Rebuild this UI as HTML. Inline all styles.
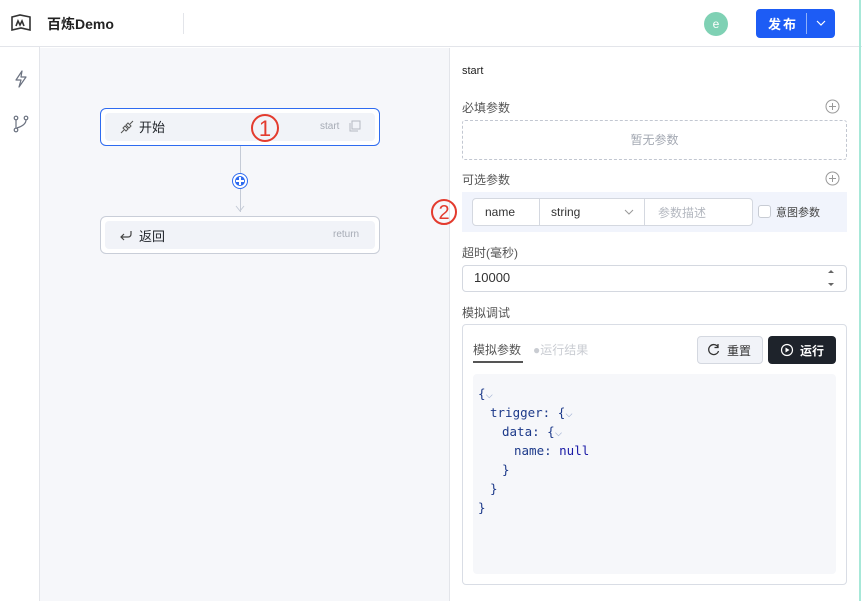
<!DOCTYPE html><html><head><meta charset="utf-8"><style>
*{box-sizing:border-box;margin:0;padding:0}
body{width:862px;height:601px;overflow:hidden;background:#fff;font-family:"Liberation Sans","Noto Sans CJK SC",sans-serif;position:relative;color:#1f2329}
.a{position:absolute}
.mono{font-family:"DejaVu Sans Mono","Liberation Mono",monospace}
.code div{height:19px;white-space:pre}
</style></head><body>
<div class="a" style="left:0;top:0;width:862px;height:47px;border-bottom:1px solid #e3e5ea"></div>
<svg class="a" style="left:10px;top:14px" width="22" height="18" viewBox="0 0 22 18"><path d="M2 3 L10 1 L20 3 L20 16 L11 14 L2 16 Z" fill="none" stroke="#333" stroke-width="1.6"/><path d="M6 12 L8 7 L10 11 L12 7 L14 12" fill="none" stroke="#333" stroke-width="1.6"/></svg>
<div class="a" style="left:47px;top:14px;font-size:14px;font-weight:bold;color:#222">百炼Demo</div>
<div class="a" style="left:183px;top:13px;width:1px;height:21px;background:#e3e5ea"></div>
<div class="a" style="left:704px;top:12px;width:24px;height:24px;border-radius:50%;background:#7fd1b4;color:#fff;font-size:12px;text-align:center;line-height:24px">e</div>
<div class="a" style="left:756px;top:9px;width:79px;height:29px;border-radius:4px;background:#1d5cf5;color:#fff"></div>
<div class="a" style="left:768px;top:14px;font-size:13px;font-weight:bold;color:#fff;letter-spacing:2px">发布</div>
<div class="a" style="left:806px;top:13px;width:1px;height:21px;background:#8fb0fa"></div>
<svg class="a" style="left:816px;top:19px" width="10" height="8"><path d="M1 2 L5 6 L9 2" fill="none" stroke="#fff" stroke-width="1.2"/></svg>
<div class="a" style="left:859px;top:0;width:2px;height:601px;background:#a7e8d8"></div>
<div class="a" style="left:39px;top:47px;width:1px;height:554px;background:#e3e5ea"></div>
<svg class="a" style="left:13px;top:70px" width="16" height="18" viewBox="0 0 16 18"><path d="M9 1 L3 10 L8 10 L6 17 L13 7 L8 7 Z" fill="none" stroke="#6b7280" stroke-width="1.2" stroke-linejoin="round"/></svg>
<svg class="a" style="left:13px;top:115px" width="16" height="18" viewBox="0 0 16 18"><circle cx="3" cy="3" r="1.8" fill="none" stroke="#6b7280" stroke-width="1.2"/><circle cx="3" cy="15" r="1.8" fill="none" stroke="#6b7280" stroke-width="1.2"/><circle cx="13" cy="3" r="1.8" fill="none" stroke="#6b7280" stroke-width="1.2"/><path d="M3 5 V13 M13 5 Q13 10 4 13" fill="none" stroke="#6b7280" stroke-width="1.2"/></svg>
<div class="a" style="left:40px;top:48px;width:409px;height:553px;background:#f6f7fa"></div>
<div class="a" style="left:449px;top:48px;width:1px;height:553px;background:#e3e5ea"></div>
<div class="a" style="left:100px;top:108px;width:280px;height:38px;border:1px solid #2e6bf0;border-radius:6px;background:#fff"></div>
<div class="a" style="left:105px;top:113px;width:270px;height:28px;border-radius:4px;background:#f1f3f8"></div>
<svg class="a" style="left:119px;top:119px" width="16" height="16" viewBox="0 0 16 16"><path d="M2 14 L5 11 M11 5 L14 2 M4 9 L7 12 L9 10 L6 7 Z M7 6 L10 9 L12 7 L9 4 Z" fill="none" stroke="#555" stroke-width="1"/></svg>
<div class="a" style="left:139px;top:117px;font-size:13px">开始</div>
<svg class="a" style="left:250px;top:113px" width="30" height="30"><circle cx="15" cy="15" r="13" fill="none" stroke="#e33b2e" stroke-width="2"/><text x="15" y="23" text-anchor="middle" font-size="22" fill="#e33b2e" font-family="Liberation Sans,sans-serif">1</text></svg>
<div class="a" style="left:320px;top:121px;font-size:10px;color:#a6abb5">start</div>
<svg class="a" style="left:349px;top:120px" width="12" height="12"><rect x="3" y="1" width="8" height="8" fill="none" stroke="#b5b9c2"/><path d="M1 3 V11 H9" fill="none" stroke="#b5b9c2"/></svg>
<div class="a" style="left:240px;top:146px;width:1px;height:66px;background:#c5cbd6"></div>
<div class="a" style="left:233px;top:174px;width:14px;height:14px;border-radius:50%;background:#2e6bf0;border:2px solid #fff;box-shadow:0 0 0 1px #2e6bf0"></div>
<div class="a" style="left:236px;top:180px;width:8px;height:1.5px;background:#fff"></div>
<div class="a" style="left:239px;top:177px;width:1.5px;height:8px;background:#fff"></div>
<svg class="a" style="left:235px;top:205px" width="10" height="8"><path d="M1 1 L5 6 L9 1" fill="none" stroke="#c5cbd6" stroke-width="1"/></svg>
<div class="a" style="left:100px;top:216px;width:280px;height:38px;border:1px solid #c9ced8;border-radius:6px;background:#fff"></div>
<div class="a" style="left:105px;top:221px;width:270px;height:28px;border-radius:4px;background:#f1f3f8"></div>
<svg class="a" style="left:119px;top:228px" width="14" height="14"><path d="M12 3 V6 Q12 9 9 9 H2 M5 6 L2 9 L5 12" fill="none" stroke="#444" stroke-width="1.2"/></svg>
<div class="a" style="left:139px;top:226px;font-size:13px">返回</div>
<div class="a" style="left:333px;top:229px;font-size:10px;color:#a6abb5">return</div>
<div class="a" style="left:462px;top:65px;font-size:11px;color:#222">start</div>
<div class="a" style="left:462px;top:99px;font-size:12px;color:#555">必填参数</div>
<svg class="a" style="left:825px;top:99px" width="15" height="15"><circle cx="7.5" cy="7.5" r="6.5" fill="none" stroke="#999" stroke-width="1"/><path d="M7.5 4 V11 M4 7.5 H11" stroke="#999"/></svg>
<div class="a" style="left:462px;top:120px;width:385px;height:40px;border:1px dashed #c2c7d1;border-radius:3px;text-align:center;line-height:38px;font-size:12px;color:#a3a8b2">暂无参数</div>
<div class="a" style="left:462px;top:171px;font-size:12px;color:#555">可选参数</div>
<svg class="a" style="left:825px;top:171px" width="15" height="15"><circle cx="7.5" cy="7.5" r="6.5" fill="none" stroke="#999" stroke-width="1"/><path d="M7.5 4 V11 M4 7.5 H11" stroke="#999"/></svg>
<div class="a" style="left:462px;top:192px;width:385px;height:40px;background:#f1f4fc"></div>
<svg class="a" style="left:431px;top:197px" width="30" height="30"><circle cx="13" cy="15" r="12" fill="none" stroke="#e33b2e" stroke-width="2"/><text x="13" y="22" text-anchor="middle" font-size="20" fill="#e33b2e" font-family="Liberation Sans,sans-serif">2</text></svg>
<div class="a" style="left:472px;top:198px;width:281px;height:28px;border:1px solid #d4d8e0;border-radius:4px;background:#fff"></div>
<div class="a" style="left:539px;top:199px;width:1px;height:26px;background:#d4d8e0"></div>
<div class="a" style="left:644px;top:199px;width:1px;height:26px;background:#d4d8e0"></div>
<div class="a" style="left:485px;top:205px;font-size:12px;color:#333">name</div>
<div class="a" style="left:551px;top:205px;font-size:12px;color:#333">string</div>
<svg class="a" style="left:624px;top:208px" width="10" height="8"><path d="M1 2 L5 6 L9 2" fill="none" stroke="#999"/></svg>
<div class="a" style="left:658px;top:204px;font-size:12px;color:#b3b7bf">参数描述</div>
<div class="a" style="left:758px;top:205px;width:13px;height:13px;border:1px solid #c8ccd4;border-radius:3px;background:#fff"></div>
<div class="a" style="left:776px;top:204px;font-size:11px;color:#444">意图参数</div>
<div class="a" style="left:462px;top:244px;font-size:12px;color:#555">超时(毫秒)</div>
<div class="a" style="left:462px;top:265px;width:385px;height:27px;border:1px solid #d4d8e0;border-radius:4px"></div>
<div class="a" style="left:474px;top:270px;font-size:13px;color:#333">10000</div>
<svg class="a" style="left:826px;top:267px" width="10" height="22"><path d="M2 6 L5 3 L8 6 Z M2 16 L5 19 L8 16 Z" fill="#666"/></svg>
<div class="a" style="left:462px;top:304px;font-size:12px;color:#555">模拟调试</div>
<div class="a" style="left:462px;top:324px;width:385px;height:261px;border:1px solid #d9dde5;border-radius:4px"></div>
<div class="a" style="left:473px;top:341px;font-size:12px;color:#555">模拟参数</div>
<div class="a" style="left:473px;top:361px;width:50px;height:2px;background:#555"></div>
<div class="a" style="left:533px;top:341px;font-size:12px;color:#c9ccd2">●运行结果</div>
<div class="a" style="left:697px;top:336px;width:66px;height:28px;border:1px solid #d4d8e0;border-radius:4px;background:#f1f3f8"></div>
<svg class="a" style="left:707px;top:343px" width="13" height="13"><path d="M11 4 A5 5 0 1 0 11.5 8" fill="none" stroke="#333" stroke-width="1.3"/><path d="M11 1 V4.5 H7.5" fill="none" stroke="#333" stroke-width="1.3"/></svg>
<div class="a" style="left:727px;top:342px;font-size:12px;color:#333">重置</div>
<div class="a" style="left:768px;top:336px;width:68px;height:28px;border-radius:4px;background:#1e232b"></div>
<svg class="a" style="left:780px;top:343px" width="14" height="14"><circle cx="7" cy="7" r="5.5" fill="none" stroke="#fff" stroke-width="1.2"/><path d="M5.5 4.5 L9.5 7 L5.5 9.5 Z" fill="#fff"/></svg>
<div class="a" style="left:800px;top:342px;font-size:12px;color:#fff;font-weight:bold">运行</div>
<div class="a" style="left:473px;top:374px;width:363px;height:200px;background:#f6f7fa;border-radius:4px"></div>
<div class="a mono code" style="left:478px;top:384px;font-size:12.5px;line-height:19px;color:#1d3a8a"><div>{<span style="color:#a9b8d6">⌵</span></div><div style="padding-left:12px">trigger: {<span style="color:#a9b8d6">⌵</span></div><div style="padding-left:24px">data: {<span style="color:#a9b8d6">⌵</span></div><div style="padding-left:36px">name: <span style="color:#1a1aa6">null</span></div><div style="padding-left:24px">}</div><div style="padding-left:12px">}</div><div>}</div></div>
</body></html>
